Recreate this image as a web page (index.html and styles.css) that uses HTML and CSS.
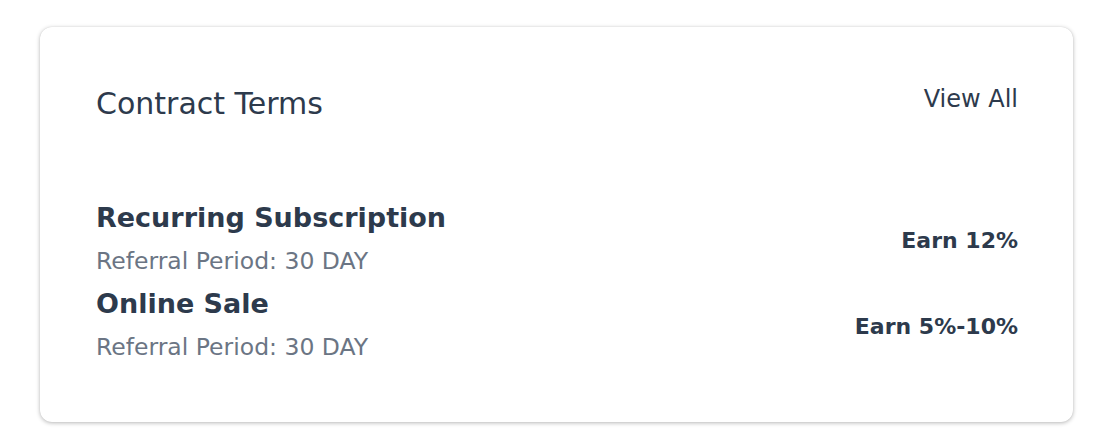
FILE: index.html
```html
<!DOCTYPE html>
<html lang="en">

<head>
  <meta charset="UTF-8" />
  <title>Contract Terms</title>
  <link rel="stylesheet" href="styles.css">
</head>

<body>
  <div class="card">
    <div class="card-header">
      <h2 class="card-title">Contract Terms</h2>
      <a class="view-all" href="#">View All</a>
    </div>

    <div class="terms">
      <div class="term">
        <div class="term-info">
          <div class="term-name">Recurring Subscription</div>
          <div class="term-period">Referral Period: 30 DAY</div>
        </div>
        <div class="term-rate">Earn 12%</div>
      </div>
      <div class="term">
        <div class="term-info">
          <div class="term-name">Online Sale</div>
          <div class="term-period">Referral Period: 30 DAY</div>
        </div>
        <div class="term-rate">Earn 5%-10%</div>
      </div>
    </div>
  </div>
</body>

</html>
```

FILE: styles.css
```css
body {
  margin: 0;
  padding: 27px 29px 26px 40px;
  font-family: "DejaVu Sans", "Noto Sans", sans-serif;
  color: #2d3a4c;
  background: #fff;
}

.card {
  background: #fff;
  border-radius: 12px;
  box-shadow: 0 1px 4px rgba(0, 0, 0, 0.28), 0 0 1px rgba(0, 0, 0, 0.12);
  padding: 57px 55px 0 56px;
  height: 395px;
  box-sizing: border-box;
}

.card-header {
  display: flex;
  justify-content: space-between;
  align-items: flex-start;
}

.card-title {
  margin: 0;
  font-size: 30px;
  font-weight: 400;
  line-height: 40px;
}

.view-all {
  color: #2d3a4c;
  text-decoration: none;
  font-size: 24px;
  line-height: 30px;
}

.terms {
  margin-top: 76px;
  display: flex;
  flex-direction: column;
  gap: 11px;
}

.term {
  display: flex;
  justify-content: space-between;
  align-items: center;
}

.term-name {
  font-size: 27px;
  font-weight: 700;
  line-height: 36px;
}

.term-period {
  font-size: 23.5px;
  color: #6b7584;
  line-height: 28px;
  margin-top: 11px;
}

.term-rate {
  font-size: 22px;
  font-weight: 700;
  padding-top: 5px;
}
```
